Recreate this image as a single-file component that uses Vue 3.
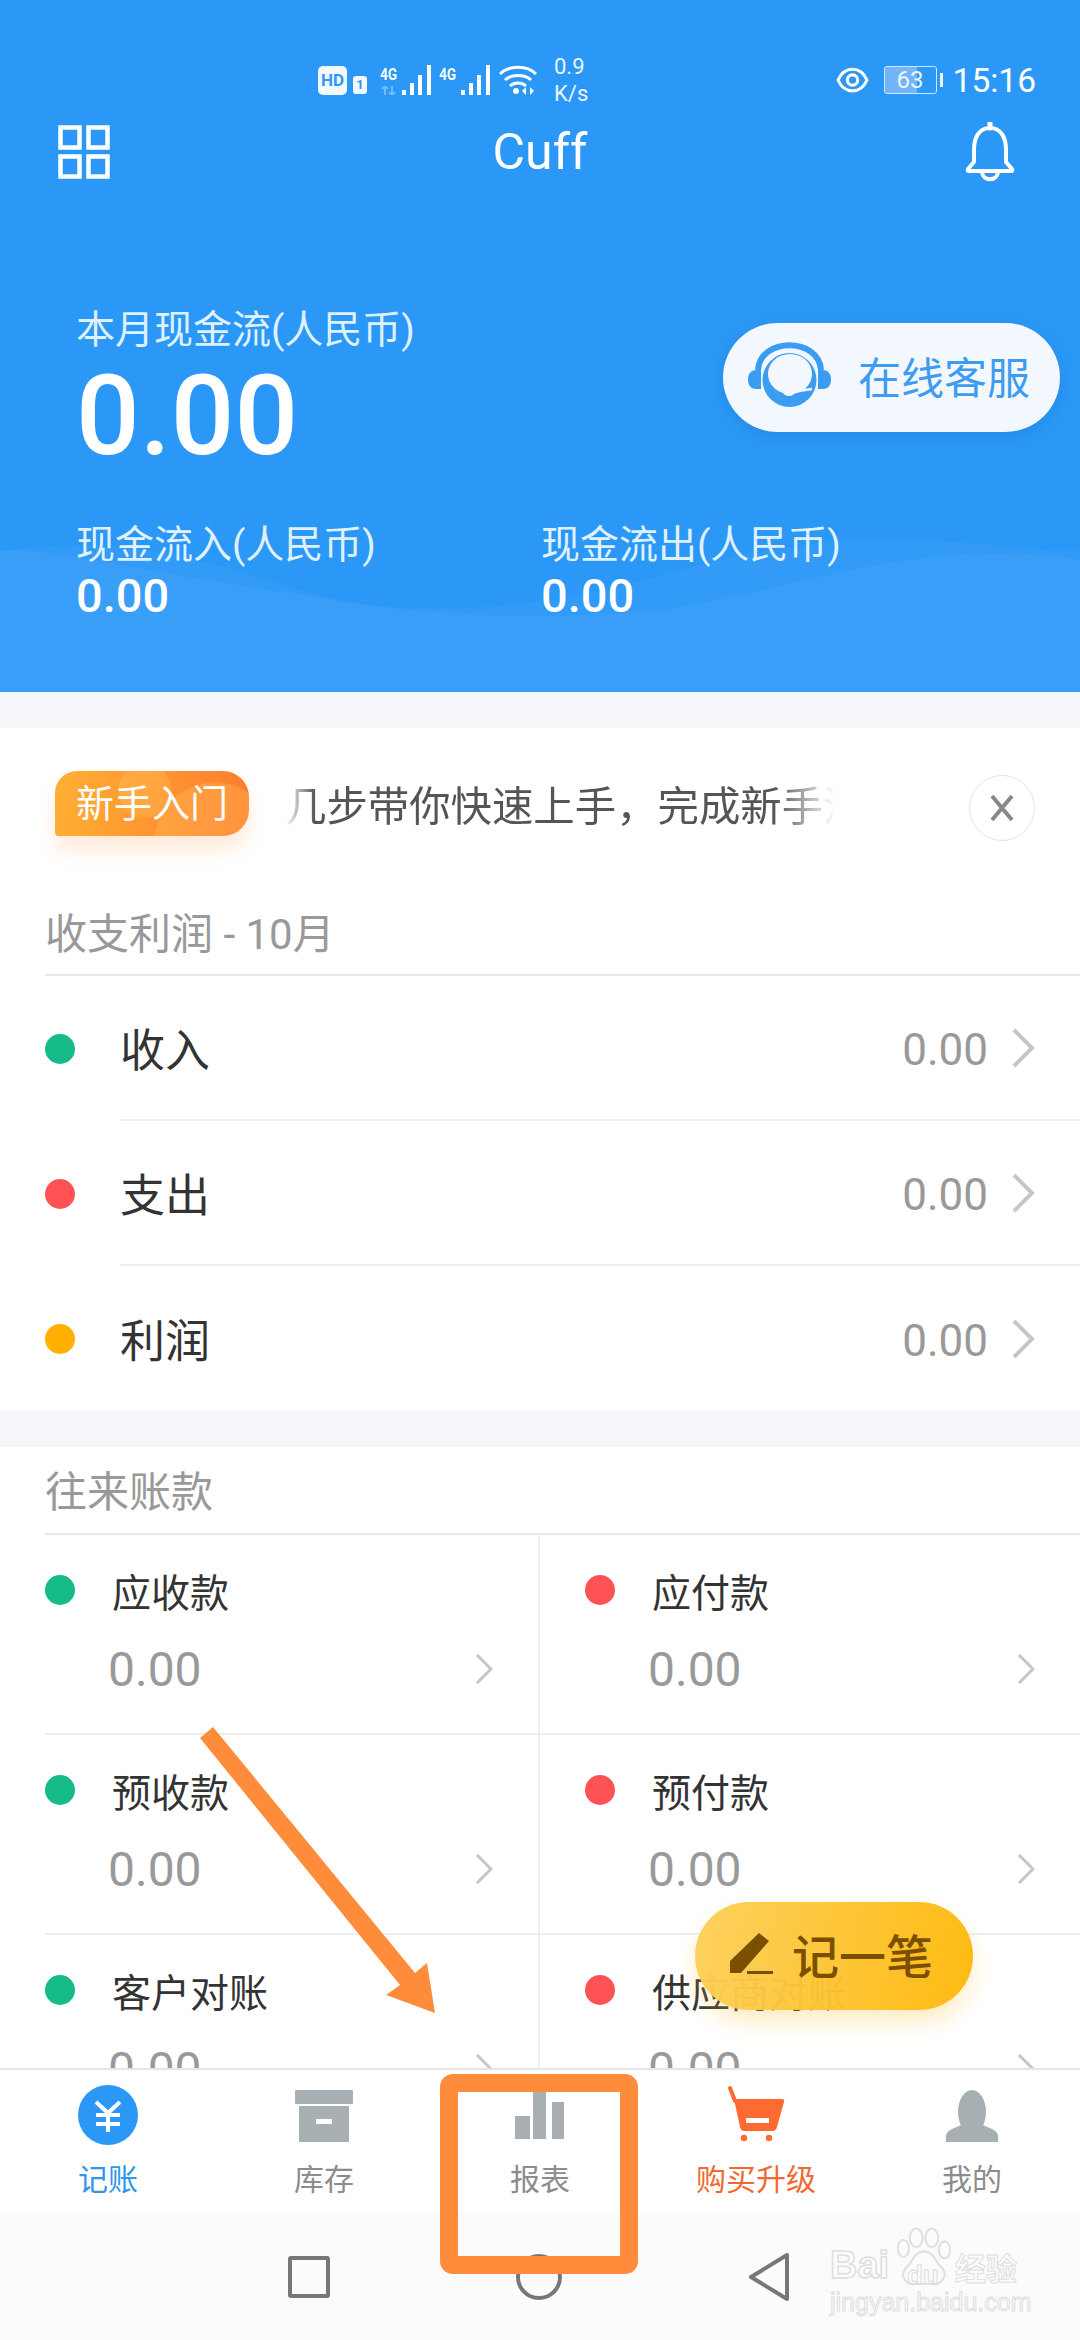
<template>
  <div class="app">
    <header class="hero">
      <svg class="waves" viewBox="0 0 1080 152" preserveAspectRatio="none">
        <path d="M0 12 C120 -8 210 22 300 50 C400 80 560 80 660 70 C800 50 920 -6 1080 20 V152 H0 Z" fill="#ffffff" opacity="0.035" />
        <path d="M0 10 C60 8 180 40 300 54 C380 72 480 76 610 50 C740 10 860 -10 950 2 C1000 6 1050 12 1080 10 V152 H0 Z" fill="#ffffff" opacity="0.035" />
      </svg>

      <div class="status-bar">
        <div class="status-left">
          <span class="hd">HD</span>
          <span class="sim">1</span>
          <div class="net first">
            <div class="net-label">
              <span>4G</span>
              <svg width="16" height="9" viewBox="0 0 16 9">
                <path d="M4 0 V9 M1 3 L4 0 L7 3 M11 0 V9 M8 6 L11 9 L14 6" stroke="#fff" stroke-width="2" fill="none" opacity="0.35" />
              </svg>
            </div>
            <svg class="bars" width="32" height="30" viewBox="0 0 32 30">
              <rect x="0" y="25" width="4" height="5" fill="#fff" />
              <rect x="8" y="18" width="4" height="12" fill="#fff" />
              <rect x="16" y="10" width="4" height="20" fill="#fff" />
              <rect x="25" y="0" width="4" height="30" fill="#fff" />
            </svg>
          </div>
          <div class="net second">
            <div class="net-label">
              <span>4G</span>
              <svg width="16" height="9" viewBox="0 0 16 9"></svg>
            </div>
            <svg class="bars" width="32" height="30" viewBox="0 0 32 30">
              <rect x="0" y="25" width="4" height="5" fill="#fff" />
              <rect x="8" y="18" width="4" height="12" fill="#fff" />
              <rect x="16" y="10" width="4" height="20" fill="#fff" />
              <rect x="25" y="0" width="4" height="30" fill="#fff" />
            </svg>
          </div>
          <svg class="wifi" width="38" height="30" viewBox="0 0 38 30" fill="none" stroke="#fff" stroke-width="3">
            <path d="M1 9 C10 0 28 0 37 9" />
            <path d="M6 15 C12 9 26 9 32 15" />
            <path d="M11 21 C15 17 23 17 27 21" />
            <circle cx="17" cy="26" r="3" fill="#fff" stroke="none" />
            <path d="M27 22 L23 26 L27 30 Z M31 22 L35 26 L31 30 Z" fill="#fff" stroke="none" />
          </svg>
          <div class="speed">
            <span>0.9</span>
            <span>K/s</span>
          </div>
        </div>
        <div class="status-right">
          <svg width="33" height="28" viewBox="0 0 32 26" fill="none" stroke="#fff" stroke-width="3">
            <path d="M2 13 C8 -1 24 -1 30 13 C24 27 8 27 2 13 Z" />
            <circle cx="16" cy="13" r="5" />
          </svg>
          <div class="battery"><span>63</span></div>
          <span class="battery-nub"></span>
          <span class="clock">15:16</span>
        </div>
      </div>

      <div class="top-nav">
        <svg class="menu-icon" width="52" height="54" viewBox="0 0 52 54" fill="none" stroke="#fff" stroke-width="4.5">
          <rect x="2.5" y="2.5" width="19" height="20" />
          <rect x="30.5" y="2.5" width="19" height="20" />
          <rect x="2.5" y="31.5" width="19" height="20" />
          <rect x="30.5" y="31.5" width="19" height="20" />
        </svg>
        <h1>Cuff</h1>
        <svg class="bell-icon" width="50" height="60" viewBox="0 0 50 60" fill="none" stroke="#fff" stroke-width="4" stroke-linejoin="round">
          <path d="M25 6 C13 6 9 17 9 28 V40 L3 47 Q2 49 4 49 H46 Q48 49 47 47 L41 40 V28 C41 17 37 6 25 6 Z" />
          <path d="M25 1 V6" stroke-width="5" stroke-linecap="round" />
          <path d="M17 49 C17 60 33 60 33 49" />
        </svg>
      </div>

      <div class="summary">
        <div>
          <div class="summary-label">本月现金流(人民币)</div>
          <div class="summary-value">0.00</div>
        </div>
        <button class="service-btn">
          <svg width="84" height="66" viewBox="0 0 84 66">
            <path d="M10 28 C12 -5 71 -5 73 28" fill="none" stroke="#3b9df2" stroke-width="6" />
            <path d="M13 28 V47 H8 C3 47 0 43 0 38 V37 C0 32 3 28 8 28 Z" fill="#3b9df2" />
            <path d="M70 28 V47 H75 C80 47 83 43 83 38 V37 C83 32 80 28 75 28 Z" fill="#3b9df2" />
            <circle cx="41.5" cy="38" r="27" fill="#3b9df2" />
            <ellipse cx="42" cy="32" rx="22" ry="20" fill="#f3f8fe" />
            <path d="M44 50 L64 47" stroke="#f3f8fe" stroke-width="2.5" />
            <ellipse cx="41" cy="50" rx="6" ry="4" fill="#f3f8fe" />
          </svg>
          <span>在线客服</span>
        </button>
      </div>

      <div class="cash-flow">
        <div v-for="item in cashFlow" :key="item" class="cash-col">
          <div class="cash-label">{{ item }}</div>
          <div class="cash-value">0.00</div>
        </div>
      </div>
    </header>

    <main class="content">
      <section class="card profit">
        <div class="guide">
          <span class="guide-badge">新手入门</span>
          <div class="guide-text">几步带你快速上手，完成新手流程</div>
          <span class="guide-close">
            <svg width="24" height="26" viewBox="0 0 24 26" stroke="#888" stroke-width="4" fill="none">
              <path d="M2 1 L22 25 M22 1 L2 25" />
            </svg>
          </span>
        </div>
        <h2 class="card-title">收支利润 - 10月</h2>
        <div v-for="(row, i) in profitRows" :key="row.name" class="row">
          <span class="dot" :class="row.color"></span>
          <div class="row-body" :class="{ 'has-line': i < profitRows.length - 1 }">
            <span class="row-name">{{ row.name }}</span>
            <span class="row-value">0.00</span>
            <svg class="chevron" width="24" height="40" viewBox="0 0 24 40" fill="none" stroke="#c6c6c6" stroke-width="4">
              <path d="M3 2 L21 20 L3 38" />
            </svg>
          </div>
        </div>
      </section>

      <section class="card accounts">
        <h2 class="card-title accounts-title">往来账款</h2>
        <div class="acct-grid">
          <div v-for="cell in accountCells" :key="cell.name" class="acct-cell">
            <div class="acct-head">
              <span class="dot" :class="cell.color"></span>
              <span class="acct-name">{{ cell.name }}</span>
            </div>
            <div class="acct-foot">
              <span class="acct-value">0.00</span>
              <svg width="18" height="30" viewBox="0 0 18 30" fill="none" stroke="#c6c6c6" stroke-width="3">
                <path d="M2 1 L16 15 L2 29" />
              </svg>
            </div>
          </div>
        </div>
      </section>
    </main>

    <nav class="tabs">
      <div v-for="tab in tabs" :key="tab.name" class="tab" :class="tab.tone">
        <svg width="60" height="60" viewBox="0 0 60 60">
          <g v-if="tab.name === '记账'">
            <circle cx="30" cy="30" r="30" fill="#2b98f7" />
            <path d="M18 17 L30 28 L42 17 M18 30 H42 M18 39 H42 M30 28 V47" fill="none" stroke="#fff" stroke-width="4" />
          </g>
          <g v-else-if="tab.name === '库存'" fill="#a7afb3">
            <rect x="1" y="5" width="58" height="14" rx="1" />
            <path d="M5 21 H55 V57 H5 Z M22 34 V39 H38 V34 Z" fill-rule="evenodd" />
          </g>
          <g v-else-if="tab.name === '报表'" fill="#a7afb3">
            <rect x="5" y="31" width="15" height="23" />
            <rect x="23" y="5" width="13" height="49" />
            <rect x="42" y="17" width="12" height="37" />
          </g>
          <g v-else-if="tab.name === '购买升级'" fill="#ff6a30">
            <path d="M4 3 L9 16" stroke="#ff6a30" stroke-width="4" stroke-linecap="round" />
            <path d="M8 14 H56 Q59 14 58 17 L51 42 Q50 46 47 46 H18 Q15 46 14 42 Z M20 33 V38 H43 V33 Z" fill-rule="evenodd" />
            <circle cx="18" cy="53" r="3.2" />
            <circle cx="43" cy="53" r="3.2" />
          </g>
          <g v-else fill="#a7afb3">
            <ellipse cx="30" cy="27" rx="14" ry="22" />
            <path d="M4 57 Q2 47 10 44 L24 38 H36 L50 44 Q58 47 56 57 Z" />
          </g>
        </svg>
        <span class="tab-name">{{ tab.name }}</span>
      </div>
    </nav>

    <div class="system-bar">
      <span class="sys-square"></span>
      <span class="sys-circle"></span>
      <svg width="42" height="48" viewBox="0 0 42 48" fill="none" stroke="#777" stroke-width="4" stroke-linejoin="round">
        <path d="M39 2 V46 L3 24 Z" />
      </svg>
      <div class="watermark">
        <svg class="paw" width="54" height="64" viewBox="0 0 76 84" fill="none" stroke="#e0e0e0" stroke-width="3">
          <ellipse cx="9" cy="30" rx="8" ry="12" />
          <ellipse cx="27" cy="15" rx="9" ry="13" />
          <ellipse cx="49" cy="15" rx="9" ry="13" />
          <ellipse cx="67" cy="32" rx="8" ry="12" />
          <path d="M38 34 C52 34 54 50 64 58 C72 68 62 82 50 80 H26 C12 82 4 68 12 58 C22 50 24 34 38 34 Z" />
        </svg>
        <span class="wm-bai">Bai</span>
        <span class="wm-du">du</span>
        <span class="wm-cn">经验</span>
        <span class="wm-url">jingyan.baidu.com</span>
      </div>
    </div>

    <button class="record-btn">
      <svg width="46" height="44" viewBox="0 0 46 44">
        <path d="M31 1 L41 9 L13 41 H2 V29 Z" fill="#7a4f00" />
        <rect x="19" y="39" width="26" height="3" fill="#7a4f00" />
      </svg>
      <span>记一笔</span>
    </button>

    <svg class="annotation" width="1080" height="2340" viewBox="0 0 1080 2340">
      <polygon points="213,1727 415,1973 427,1963 435,2013 386,1995 400,1985 200,1738" fill="#ff8c3a" />
      <rect x="449" y="2083" width="180" height="182" rx="4" fill="none" stroke="#ff8c3a" stroke-width="18" />
    </svg>
  </div>
</template>

<script setup>
const cashFlow = ["现金流入(人民币)", "现金流出(人民币)"];

const profitRows = [
  { name: "收入", color: "green" },
  { name: "支出", color: "red" },
  { name: "利润", color: "amber" },
];

const accountCells = [
  { name: "应收款", color: "green" },
  { name: "应付款", color: "red" },
  { name: "预收款", color: "green" },
  { name: "预付款", color: "red" },
  { name: "客户对账", color: "green" },
  { name: "供应商对账", color: "red" },
];

const tabs = [
  { name: "记账", tone: "active" },
  { name: "库存", tone: "" },
  { name: "报表", tone: "" },
  { name: "购买升级", tone: "promo" },
  { name: "我的", tone: "" },
];
</script>

<style>
html,
body {
  margin: 0;
  background: #fff;
}
</style>

<style scoped>
.app {
  position: relative;
  width: 1080px;
  height: 2340px;
  overflow: hidden;
  display: flex;
  flex-direction: column;
  background: #f5f7fb;
  font-family: Roboto, "Noto Sans CJK SC", sans-serif;
}

.hero {
  position: relative;
  height: 692px;
  flex-shrink: 0;
  background: #2b98f7;
  color: #fff;
}

.waves {
  position: absolute;
  left: 0;
  bottom: 0;
  width: 1080px;
  height: 152px;
}

.status-bar {
  position: relative;
  height: 60px;
  padding-top: 50px;
  display: flex;
  justify-content: space-between;
  align-items: center;
}

.status-left {
  display: flex;
  align-items: center;
  margin-left: 318px;
}

.hd {
  width: 29px;
  height: 29px;
  border-radius: 5px;
  background: #f2f8fe;
  color: #2b98f7;
  font-size: 17px;
  font-weight: 700;
  line-height: 29px;
  text-align: center;
}

.sim {
  width: 14px;
  height: 18px;
  margin: 9px 0 0 6px;
  border-radius: 3px;
  background: #f2f8fe;
  color: #2b98f7;
  font-size: 13px;
  font-weight: 700;
  line-height: 18px;
  text-align: center;
}

.net {
  display: flex;
  align-items: flex-end;
  height: 30px;
}

.net.first {
  margin-left: 12px;
}

.net.second {
  margin-left: 4px;
}

.net-label {
  width: 20px;
  display: flex;
  flex-direction: column;
  align-items: center;
  font-size: 17px;
  font-weight: 700;
  line-height: 17px;
  gap: 3px;
}

.net-label span {
  transform: scaleX(0.8);
}

.bars {
  margin-left: 3px;
}

.wifi {
  margin-left: 6px;
}

.speed {
  display: flex;
  flex-direction: column;
  margin-left: 17px;
  font-size: 22px;
  line-height: 27px;
  color: #eaf5ff;
}

.status-right {
  display: flex;
  align-items: center;
  margin-right: 44px;
}

.battery {
  width: 51px;
  height: 26px;
  margin-left: 15px;
  border: 1.5px solid #cfe6fd;
  border-radius: 3px;
  background: linear-gradient(90deg, #73b6f8 63%, transparent 63%);
  font-size: 24px;
  line-height: 26px;
  text-align: center;
  color: #eaf5ff;
}

.battery-nub {
  width: 3px;
  height: 14px;
  margin-left: 3px;
  background: #eaf5ff;
}

.clock {
  margin-left: 10px;
  font-size: 33.5px;
}

.top-nav {
  position: relative;
  display: grid;
  grid-template-columns: 1fr auto 1fr;
  align-items: center;
  height: 64px;
  margin-top: 10px;
}

.menu-icon {
  margin-left: 58px;
}

.bell-icon {
  justify-self: end;
  margin-right: 65px;
}

.top-nav h1 {
  margin: 0;
  font-size: 50px;
  font-weight: 400;
  line-height: 64px;
}

.summary {
  position: relative;
  display: flex;
  justify-content: space-between;
  align-items: flex-start;
  margin-top: 121px;
  padding: 0 20px 0 76px;
}

.summary-label {
  font-size: 39px;
  line-height: 50px;
  color: #dff1ff;
}

.summary-value {
  margin-top: 6px;
  font-size: 112px;
  font-weight: 500;
  line-height: 110px;
}

.service-btn {
  display: flex;
  align-items: center;
  gap: 26px;
  width: 337px;
  height: 109px;
  margin-top: 18px;
  padding: 0 0 5px 25px;
  border: none;
  border-radius: 55px;
  background: #f3f8fe;
  box-shadow: 0 4px 16px rgba(20, 90, 170, 0.22);
  color: #3d9cef;
  font-family: inherit;
  font-size: 43px;
}

.cash-flow {
  position: relative;
  display: flex;
  margin-top: 52px;
  padding-left: 76px;
}

.cash-col {
  width: 465px;
}

.cash-label {
  font-size: 39px;
  line-height: 44px;
  color: #dff1ff;
}

.cash-value {
  margin-top: 4px;
  font-size: 47px;
  font-weight: 500;
  line-height: 50px;
}

.content {
  flex: 1;
  min-height: 0;
  overflow: hidden;
  padding-top: 36px;
}

.card {
  background: #fff;
}

.accounts {
  margin-top: 36px;
  min-height: 700px;
}

.guide {
  display: flex;
  align-items: flex-start;
  height: 161px;
  padding: 43px 45px 0 55px;
  box-sizing: border-box;
}

.guide-badge {
  width: 194px;
  height: 65px;
  flex-shrink: 0;
  border-radius: 22px 26px 26px 4px;
  background:
    radial-gradient(circle at 160px 72px, rgba(255, 190, 90, 0.35) 60px, transparent 61px),
    radial-gradient(circle at 90px 20px, rgba(255, 200, 100, 0.3) 26px, transparent 27px),
    linear-gradient(100deg, #ffb034, #ff7b2e);
  box-shadow: 0 14px 20px rgba(255, 150, 70, 0.2);
  color: #fff;
  font-size: 38px;
  line-height: 66px;
  text-align: center;
}

.guide-text {
  width: 550px;
  margin: 11px 0 0 36px;
  overflow: hidden;
  box-sizing: border-box;
  white-space: nowrap;
  color: #555;
  font-size: 41.4px;
  line-height: 50px;
  -webkit-mask-image: linear-gradient(90deg, transparent, #000 30px, #000 490px, transparent);
  mask-image: linear-gradient(90deg, transparent, #000 30px, #000 490px, transparent);
}

.guide-close {
  display: flex;
  align-items: center;
  justify-content: center;
  width: 64px;
  height: 64px;
  margin: 4px 0 0 auto;
  border: 1px solid #e2e2e2;
  border-radius: 50%;
}

.card-title {
  height: 87px;
  margin: 0 0 0 45px;
  padding-top: 21px;
  box-sizing: border-box;
  border-bottom: 2px solid #e6e8ea;
  color: #999;
  font-size: 42px;
  font-weight: 400;
  line-height: 50px;
}

.accounts-title {
  height: 88px;
  padding-top: 21px;
}

.row {
  display: flex;
  align-items: center;
  height: 145px;
  padding-left: 45px;
}

.dot {
  width: 30px;
  height: 30px;
  flex-shrink: 0;
  border-radius: 50%;
}

.dot.green {
  background: #17bb8a;
}

.dot.red {
  background: #ff5257;
}

.dot.amber {
  background: #ffb000;
}

.row-body {
  flex: 1;
  display: flex;
  align-items: center;
  height: 100%;
  margin-left: 45px;
  padding-right: 45px;
  box-sizing: border-box;
}

.row-body.has-line {
  border-bottom: 2px solid #eceeef;
}

.row-name {
  flex: 1;
  color: #333;
  font-size: 45px;
}

.row-value {
  margin-right: 23px;
  padding-top: 5px;
  color: #999;
  font-size: 44px;
}

.acct-grid {
  display: grid;
  grid-template-columns: 540px 540px;
}

.acct-cell {
  height: 200px;
  padding: 33px 45px 0;
  box-sizing: border-box;
  border-bottom: 2px solid #eceeef;
}

.acct-cell:nth-child(odd) {
  margin-left: 45px;
  padding-left: 0;
  border-right: 2px solid #eceeef;
}

.acct-head {
  display: flex;
  align-items: center;
  height: 44px;
}

.acct-name {
  margin-left: 37px;
  color: #333;
  font-size: 39px;
}

.acct-foot {
  display: flex;
  align-items: center;
  justify-content: space-between;
  height: 60px;
  margin-top: 27px;
  padding-left: 63px;
}

.acct-value {
  color: #999;
  font-size: 48px;
}

.tabs {
  display: grid;
  grid-template-columns: repeat(5, 216px);
  height: 145px;
  flex-shrink: 0;
  box-sizing: border-box;
  border-top: 2px solid #e3e5e7;
  background: #fff;
}

.tab {
  display: flex;
  flex-direction: column;
  align-items: center;
  padding-top: 15px;
  color: #8c8c8c;
  font-size: 30px;
}

.tab.active {
  color: #2f96e8;
}

.tab.promo {
  color: #f0692f;
}

.tab-name {
  margin-top: 13px;
  line-height: 44px;
}

.system-bar {
  position: relative;
  display: flex;
  align-items: center;
  gap: 186px;
  height: 127px;
  flex-shrink: 0;
  padding: 0 0 0 288px;
  box-sizing: border-box;
  background: #fbfbfb;
}

.sys-square {
  width: 42px;
  height: 42px;
  box-sizing: border-box;
  border: 4px solid #777;
  border-radius: 3px;
}

.sys-circle {
  width: 46px;
  height: 46px;
  box-sizing: border-box;
  border: 4px solid #777;
  border-radius: 50%;
}

.watermark {
  position: absolute;
  left: 829px;
  top: 12px;
  width: 195px;
  height: 96px;
  color: transparent;
  font-family: "Liberation Sans", "Noto Sans CJK SC", sans-serif;
}

.watermark span {
  position: absolute;
  white-space: nowrap;
}

.paw {
  position: absolute;
  left: 68px;
  top: 0;
}

.wm-bai {
  left: 1px;
  top: 18px;
  font-size: 38px;
  font-weight: 700;
  line-height: 44px;
  -webkit-text-stroke: 1.5px #dedede;
}

.wm-du {
  left: 78px;
  top: 35px;
  font-size: 26px;
  font-weight: 700;
  line-height: 30px;
  -webkit-text-stroke: 1px #dedede;
}

.wm-cn {
  left: 126px;
  top: 27px;
  font-size: 31px;
  font-weight: 700;
  line-height: 36px;
  -webkit-text-stroke: 1px #dedede;
}

.wm-url {
  left: 1px;
  top: 62px;
  font-size: 25px;
  line-height: 30px;
  -webkit-text-stroke: 1px #dedede;
}

.record-btn {
  position: absolute;
  left: 695px;
  top: 1902px;
  display: flex;
  align-items: center;
  gap: 18px;
  width: 278px;
  height: 108px;
  padding: 0 0 5px 33px;
  border: none;
  border-radius: 54px;
  background: linear-gradient(100deg, rgba(253, 208, 90, 0.97), rgba(254, 184, 10, 0.97));
  box-shadow: 0 12px 22px rgba(255, 190, 40, 0.28);
  color: #7a4f00;
  font-family: inherit;
  font-size: 47px;
  font-weight: 500;
}

.annotation {
  position: absolute;
  left: 0;
  top: 0;
  pointer-events: none;
}
</style>
